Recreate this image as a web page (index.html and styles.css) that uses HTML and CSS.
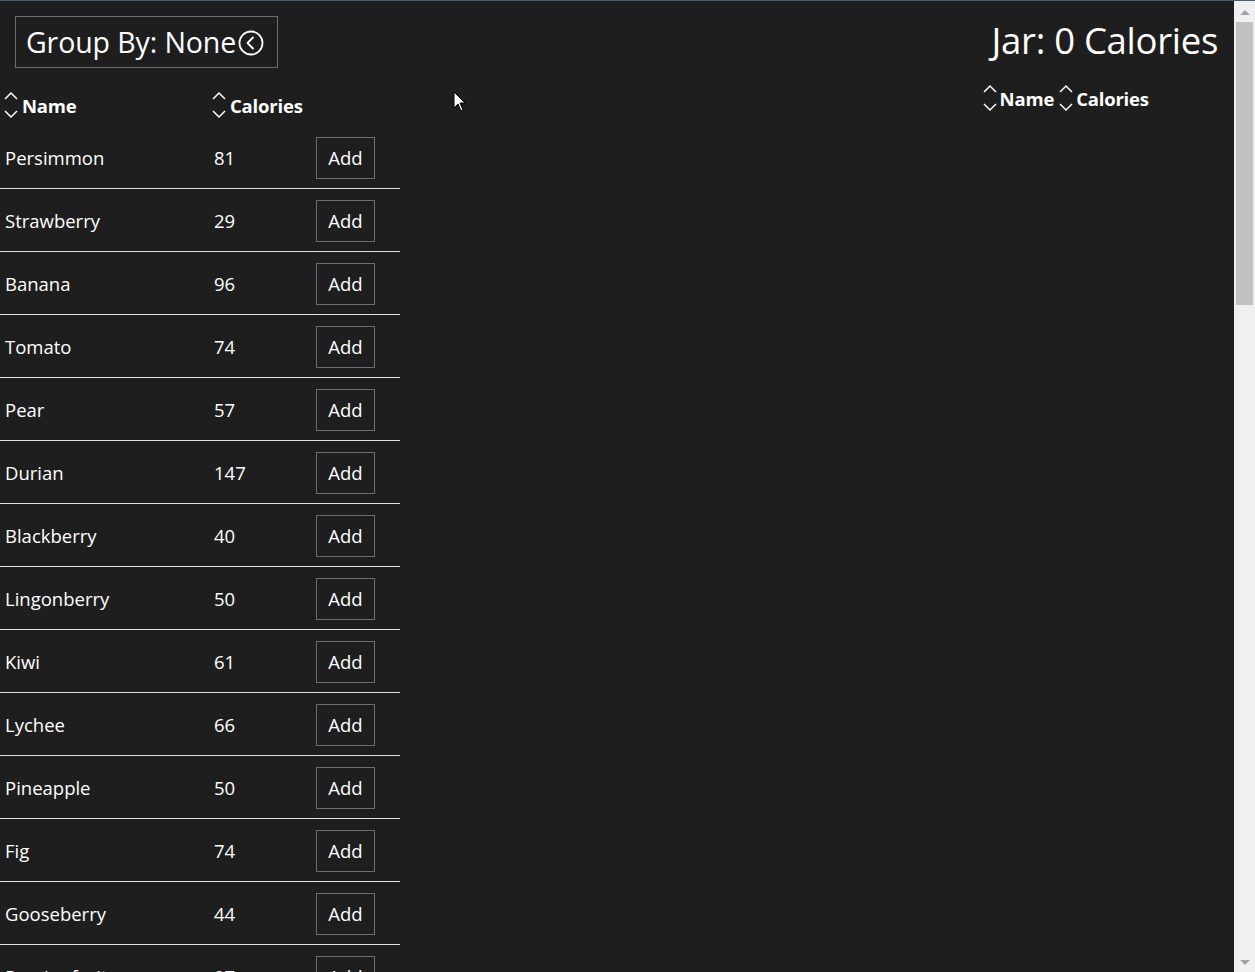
FILE: index.html
```html
<!DOCTYPE html>
<html>
<head>
<meta charset="utf-8">
<link rel="stylesheet" href="styles.css">
</head>
<body>
<div class="frame">
  <div class="viewport">
    <section class="left">
      <button class="group-btn">Group By: None<svg class="circ" width="26" height="26" viewBox="0 0 26 26"><circle cx="13" cy="13" r="11.5" fill="none" stroke="#fff" stroke-width="1.8"/><path d="M15 7.5 L9.5 13 L15 18.5" fill="none" stroke="#fff" stroke-width="1.8" stroke-linecap="round" stroke-linejoin="round"/></svg></button>
      <div class="table">
        <div class="thead">
          <div class="th"><svg class="sort" width="14" height="28" viewBox="0 0 14 28"><path d="M1 8 L7 2 L13 8 M1 20 L7 26 L13 20" fill="none" stroke="#fff" stroke-width="1.5"/></svg>Name</div>
          <div class="th"><svg class="sort" width="14" height="28" viewBox="0 0 14 28"><path d="M1 8 L7 2 L13 8 M1 20 L7 26 L13 20" fill="none" stroke="#fff" stroke-width="1.5"/></svg>Calories</div>
          <div class="th"></div>
        </div>
        <div class="row"><div class="td">Persimmon</div><div class="td">81</div><div class="td"><button class="add">Add</button></div></div>
        <div class="row"><div class="td">Strawberry</div><div class="td">29</div><div class="td"><button class="add">Add</button></div></div>
        <div class="row"><div class="td">Banana</div><div class="td">96</div><div class="td"><button class="add">Add</button></div></div>
        <div class="row"><div class="td">Tomato</div><div class="td">74</div><div class="td"><button class="add">Add</button></div></div>
        <div class="row"><div class="td">Pear</div><div class="td">57</div><div class="td"><button class="add">Add</button></div></div>
        <div class="row"><div class="td">Durian</div><div class="td">147</div><div class="td"><button class="add">Add</button></div></div>
        <div class="row"><div class="td">Blackberry</div><div class="td">40</div><div class="td"><button class="add">Add</button></div></div>
        <div class="row"><div class="td">Lingonberry</div><div class="td">50</div><div class="td"><button class="add">Add</button></div></div>
        <div class="row"><div class="td">Kiwi</div><div class="td">61</div><div class="td"><button class="add">Add</button></div></div>
        <div class="row"><div class="td">Lychee</div><div class="td">66</div><div class="td"><button class="add">Add</button></div></div>
        <div class="row"><div class="td">Pineapple</div><div class="td">50</div><div class="td"><button class="add">Add</button></div></div>
        <div class="row"><div class="td">Fig</div><div class="td">74</div><div class="td"><button class="add">Add</button></div></div>
        <div class="row"><div class="td">Gooseberry</div><div class="td">44</div><div class="td"><button class="add">Add</button></div></div>
        <div class="row"><div class="td">Passionfruit</div><div class="td">97</div><div class="td"><button class="add">Add</button></div></div>
      </div>
    </section>
    <section class="right">
      <h1 class="jar-title">Jar: 0 Calories</h1>
      <div class="jar-head">
        <div class="jh"><svg class="sort" width="14" height="28" viewBox="0 0 14 28"><path d="M1 8 L7 2 L13 8 M1 20 L7 26 L13 20" fill="none" stroke="#fff" stroke-width="1.5"/></svg>Name</div>
        <div class="jh"><svg class="sort" width="14" height="28" viewBox="0 0 14 28"><path d="M1 8 L7 2 L13 8 M1 20 L7 26 L13 20" fill="none" stroke="#fff" stroke-width="1.5"/></svg>Calories</div>
      </div>
    </section>
    <svg class="cursor" width="14" height="22" viewBox="0 0 14 22"><path d="M1 1 L1 17 L5 13 L8 20 L10 19 L7 12 L12 12 Z" fill="#fff" stroke="#000" stroke-width="1"/></svg>
  </div>
  <div class="scrollbar">
    <div class="arrow up"></div>
    <div class="thumb"></div>
    <div class="track"></div>
    <div class="arrow down"></div>
  </div>
</div>
</body>
</html>
```

FILE: styles.css
```css
html, body {
  margin: 0;
  padding: 0;
  height: 100%;
  overflow: hidden;
  background: #1e1e1e;
}
body {
  font-family: "Open Sans", "Noto Sans", sans-serif;
  color: #fff;
}
.frame {
  display: flex;
  height: 100%;
  border-top: 1px solid #3e5e7e;
  box-sizing: border-box;
}
.viewport {
  flex: 1;
  display: flex;
  justify-content: space-between;
  position: relative;
  overflow: hidden;
}
.left {
  width: 400px;
  padding-top: 15px;
}
.group-btn {
  margin-left: 15px;
  height: 52px;
  width: 263px;
  display: flex;
  align-items: center;
  gap: 2px;
  padding: 0 0 0 10px;
  background: transparent;
  border: 1px solid #6c6c78;
  color: #fff;
  font-family: "Open Sans", "Noto Sans", sans-serif;
  font-size: 28.5px;
  font-weight: 400;
  letter-spacing: -0.1px;
  box-sizing: border-box;
}
.circ { flex: none; margin-top: 1px; }
.table {
  margin-top: 16px;
  width: 400px;
}
.thead, .row {
  display: grid;
  grid-template-columns: 208px 102px 90px;
}
.thead {
  height: 42px;
  align-items: center;
}
.th {
  display: flex;
  align-items: center;
  gap: 4px;
  padding-left: 4px;
  font-weight: 700;
  font-size: 18.5px;
  letter-spacing: -0.2px;
}
.sort { flex: none; }
.row {
  height: 62px;
  align-items: center;
  border-bottom: 1px solid #e0e0e0;
}
.td {
  padding-left: 5px;
  font-size: 18.5px;
  letter-spacing: 0;
}
.td:nth-child(2) { padding-left: 6px; }
.add {
  margin-left: 1px;
  width: 59px;
  height: 42px;
  background: transparent;
  border: 1px solid #6c6c78;
  color: #fff;
  font-family: "Open Sans", "Noto Sans", sans-serif;
  font-size: 18.5px;
  padding: 0;
  margin-top: 1px;
}
.right {
  display: flex;
  flex-direction: column;
  align-items: flex-start;
  padding-right: 16px;
  padding-top: 15px;
}
.jar-title {
  margin: 0;
  padding-left: 9px;
  font-size: 36.5px;
  font-weight: 400;
  line-height: 48px;
  letter-spacing: -0.3px;
}
.jar-head {
  display: flex;
  gap: 5px;
  margin-top: 20px;
}
.jh {
  display: flex;
  align-items: center;
  gap: 3px;
  font-weight: 700;
  font-size: 18.5px;
  letter-spacing: -0.2px;
}
.cursor {
  position: absolute;
  left: 453px;
  top: 90px;
}
.scrollbar {
  width: 21px;
  flex: none;
  background: #f0f0f0;
  display: flex;
  flex-direction: column;
  align-items: center;
}
.arrow {
  width: 0;
  height: 0;
  border-left: 5px solid transparent;
  border-right: 5px solid transparent;
  flex: none;
}
.arrow.up {
  border-bottom: 5px solid #a3a3a3;
  margin-top: 9px;
  margin-bottom: 7px;
}
.arrow.down {
  border-top: 5px solid #a3a3a3;
  margin-bottom: 7px;
}
.thumb {
  width: 17px;
  height: 283px;
  background: #c1c1c1;
  flex: none;
}
.track { flex: 1; }
```
